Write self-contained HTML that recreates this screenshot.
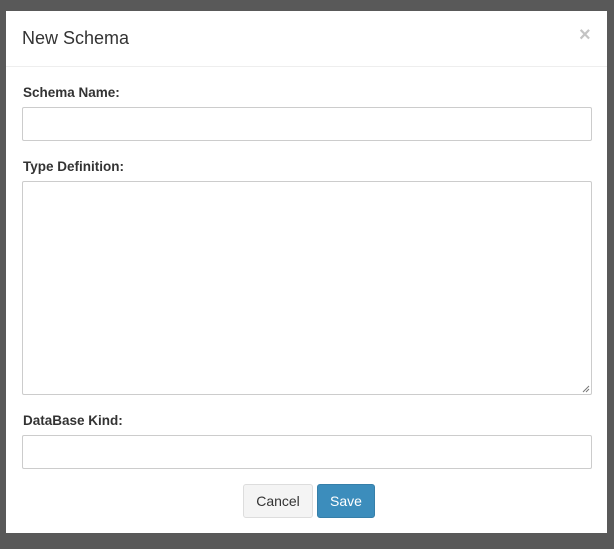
<!DOCTYPE html>
<html><head><style>
body{margin:0;width:614px;height:549px;background:#595959;font-family:"Liberation Sans",Arial,sans-serif;position:relative;overflow:hidden}
.m{position:absolute;left:6px;top:11px;width:601px;height:522px;background:#fff}
.h{position:absolute;left:0;top:0;width:601px;height:55px;border-bottom:1px solid #eee}
.t{position:absolute;left:16px;top:17px;font-size:18px;color:#333}
.x{position:absolute;left:573px;top:13px;font-size:20px;font-weight:bold;color:#c4c4c4}
.l{position:absolute;left:17px;font-size:13.5px;font-weight:bold;color:#333}
.i{position:absolute;left:16px;width:570px;border:1px solid #ccc;border-radius:2px;box-sizing:border-box}
.b{position:absolute;top:473px;height:34px;box-sizing:border-box;border-radius:3px;font-size:14px;text-align:center;line-height:32px}
</style></head><body>
<div class="m">
<div class="h"><div class="t">New Schema</div><div class="x">×</div></div>
<div class="l" style="top:74px">Schema Name:</div>
<div class="i" style="top:96px;height:34px"></div>
<div class="l" style="top:148px">Type Definition:</div>
<div class="i" style="top:170px;height:214px"><svg style="position:absolute;right:1px;bottom:1px" width="8" height="8"><path d="M1 7L7 1M4 7L7 4" stroke="#777" stroke-width="1"/></svg></div>
<div class="l" style="top:402px">DataBase Kind:</div>
<div class="i" style="top:424px;height:34px"></div>
<div class="b" style="left:237px;width:70px;background:#f4f4f4;border:1px solid #ddd;color:#333">Cancel</div>
<div class="b" style="left:311px;width:58px;background:#3c8dbc;border:1px solid #367fa9;color:#fff">Save</div>
</div>
</body></html>
